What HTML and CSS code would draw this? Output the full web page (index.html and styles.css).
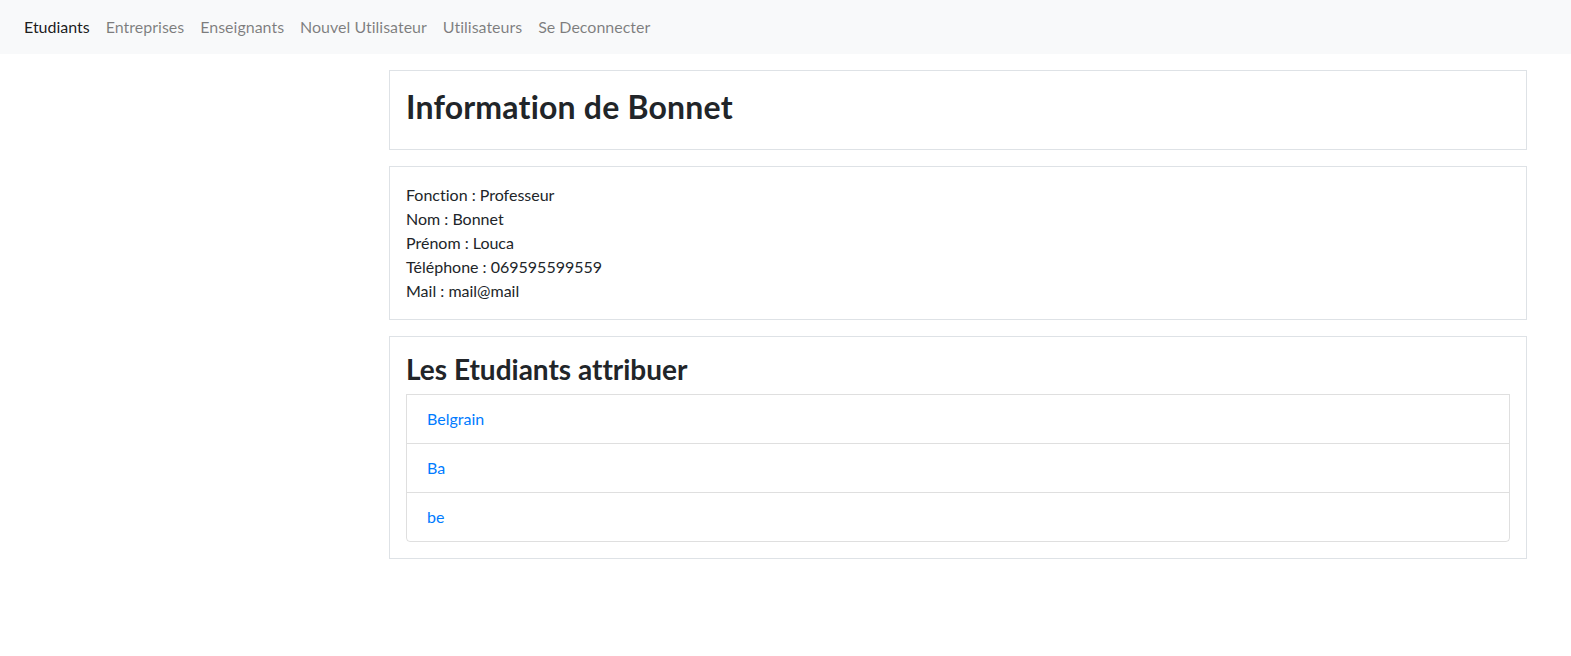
FILE: index.html
```html
<!DOCTYPE html>
<html lang="fr">
<head>
<meta charset="utf-8">
<title>Information de Bonnet</title>
<link rel="stylesheet" href="styles.css">
</head>
<body>
<nav class="navbar">
  <ul class="nav">
    <li><a class="nav-link active" href="#">Etudiants</a></li>
    <li><a class="nav-link" href="#">Entreprises</a></li>
    <li><a class="nav-link" href="#">Enseignants</a></li>
    <li><a class="nav-link" href="#">Nouvel Utilisateur</a></li>
    <li><a class="nav-link" href="#">Utilisateurs</a></li>
    <li><a class="nav-link" href="#">Se Deconnecter</a></li>
  </ul>
</nav>
<main class="main">
  <section class="box">
    <h2 class="title">Information de Bonnet</h2>
  </section>
  <section class="box">
    <p class="info">Fonction : Professeur<br>Nom : Bonnet<br>Prénom : Louca<br>Téléphone : 069595599559<br>Mail : mail@mail</p>
  </section>
  <section class="box">
    <h3 class="subtitle">Les Etudiants attribuer</h3>
    <ul class="list-group">
      <li class="list-item"><a href="#">Belgrain</a></li>
      <li class="list-item"><a href="#">Ba</a></li>
      <li class="list-item"><a href="#">be</a></li>
    </ul>
  </section>
</main>
</body>
</html>
```

FILE: styles.css
```css
* { box-sizing: border-box; }
html, body { margin: 0; padding: 0; }
body {
  font-family: "Lato", "Noto Sans", sans-serif;
  font-size: 16px;
  line-height: 24px;
  color: #212529;
  background: #fff;
  font-variant-ligatures: none;
  font-feature-settings: "liga" 0, "dlig" 0;
}
a { text-decoration: none; }

.navbar {
  background: #f8f9fa;
  height: 54px;
  padding: 0 16px;
  display: flex;
  align-items: center;
}
.nav {
  list-style: none;
  margin: 0;
  padding: 0;
  display: flex;
}
.nav-link {
  display: block;
  padding: 7px 8px;
  color: rgba(0, 0, 0, 0.5);
}
.nav-link.active { color: rgba(0, 0, 0, 0.9); }

.main {
  padding: 16px 44px 0 389px;
  display: flex;
  flex-direction: column;
  gap: 16px;
}
.box {
  border: 1px solid #dee2e6;
  padding: 16px;
}
.title {
  margin: 0 0 6px;
  font-size: 32px;
  line-height: 40px;
  font-weight: 700;
  letter-spacing: 0.2px;
}
.info {
  margin: 0;
}
.subtitle {
  margin: 0 0 8px;
  font-size: 28px;
  line-height: 33px;
  font-weight: 700;
}
.list-group {
  list-style: none;
  margin: 0;
  padding: 0;
  border: 1px solid rgba(0, 0, 0, 0.125);
  border-radius: 0 0 4px 4px;
}
.list-item {
  padding: 12px 20px;
  border-top: 1px solid rgba(0, 0, 0, 0.125);
}
.list-item:first-child { border-top: 0; }
.list-item a { color: #007bff; }
```
